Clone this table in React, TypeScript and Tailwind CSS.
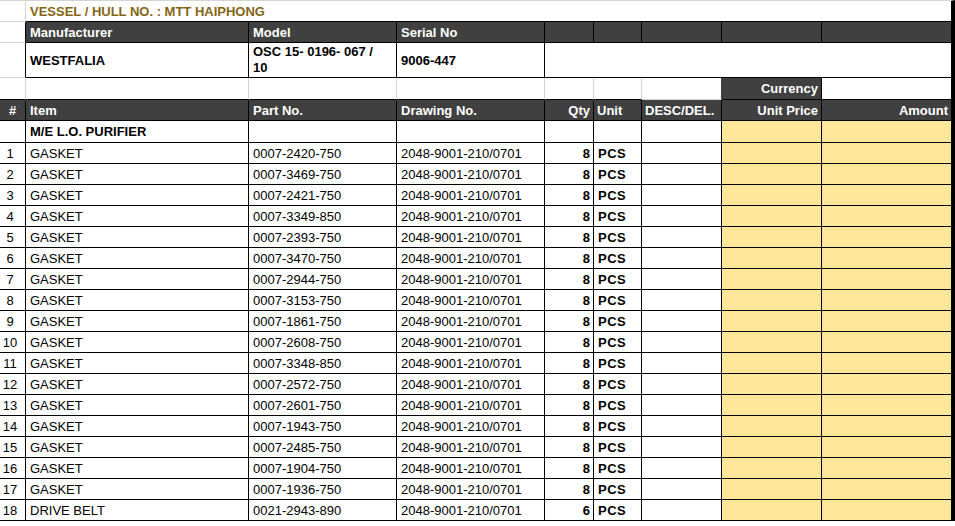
const COLS = "grid grid-cols-[26px_223px_148px_148px_49px_48px_80px_100px_129px]";
const DRAWING = "2048-9001-210/0701";

const items: { item: string; part: string; qty: number }[] = [
  { item: "GASKET", part: "0007-2420-750", qty: 8 },
  { item: "GASKET", part: "0007-3469-750", qty: 8 },
  { item: "GASKET", part: "0007-2421-750", qty: 8 },
  { item: "GASKET", part: "0007-3349-850", qty: 8 },
  { item: "GASKET", part: "0007-2393-750", qty: 8 },
  { item: "GASKET", part: "0007-3470-750", qty: 8 },
  { item: "GASKET", part: "0007-2944-750", qty: 8 },
  { item: "GASKET", part: "0007-3153-750", qty: 8 },
  { item: "GASKET", part: "0007-1861-750", qty: 8 },
  { item: "GASKET", part: "0007-2608-750", qty: 8 },
  { item: "GASKET", part: "0007-3348-850", qty: 8 },
  { item: "GASKET", part: "0007-2572-750", qty: 8 },
  { item: "GASKET", part: "0007-2601-750", qty: 8 },
  { item: "GASKET", part: "0007-1943-750", qty: 8 },
  { item: "GASKET", part: "0007-2485-750", qty: 8 },
  { item: "GASKET", part: "0007-1904-750", qty: 8 },
  { item: "GASKET", part: "0007-1936-750", qty: 8 },
  { item: "DRIVE BELT", part: "0021-2943-890", qty: 6 },
];

function Cell({ className = "", children }: { className?: string; children?: React.ReactNode }) {
  return (
    <div className={`flex items-center border-r border-b leading-[15px] whitespace-nowrap overflow-hidden ${className}`}>
      {children}
    </div>
  );
}

export default function App() {
  return (
    <div className="w-[955px] min-h-[526px] bg-white text-[13px] text-black font-['Liberation_Sans',Arial,sans-serif]">
      <div className="w-[955px] border-t border-[#d4d4d4] border-r-4 border-r-black">
        {/* title */}
        <div className={`${COLS} h-[21px]`}>
          <Cell className="border-[#d4d4d4]" />
          <Cell className="col-span-8 border-r-0 border-b-black pl-[4px] font-bold text-[#846615]">
            VESSEL / HULL NO. : MTT HAIPHONG
          </Cell>
        </div>

        {/* equipment header */}
        <div className={`${COLS} h-[21px]`}>
          <Cell className="border-b-[#d4d4d4] border-r-black" />
          <Cell className="bg-[#404040] border-black pl-[4px] font-bold text-white">Manufacturer</Cell>
          <Cell className="bg-[#404040] border-black pl-[4px] font-bold text-white">Model</Cell>
          <Cell className="bg-[#404040] border-black pl-[4px] font-bold text-white">Serial No</Cell>
          <Cell className="bg-[#404040] border-black" />
          <Cell className="bg-[#404040] border-black" />
          <Cell className="bg-[#404040] border-black" />
          <Cell className="bg-[#404040] border-black" />
          <Cell className="bg-[#404040] border-black border-r-0" />
        </div>

        {/* equipment info */}
        <div className={`${COLS} h-[35px]`}>
          <Cell className="border-b-[#d4d4d4] border-r-black" />
          <Cell className="border-black pl-[4px] font-bold">WESTFALIA</Cell>
          <Cell className="border-black pl-[4px] font-bold whitespace-normal leading-[16px]">
            OSC 15- 0196- 067 /<br />10
          </Cell>
          <Cell className="border-black pl-[4px] font-bold">9006-447</Cell>
          <Cell className="col-span-5 border-black border-r-0" />
        </div>

        {/* spacer row with currency */}
        <div className={`${COLS} h-[22px]`}>
          <Cell className="border-[#d4d4d4] border-b-black" />
          <Cell className="border-[#d4d4d4] border-b-black" />
          <Cell className="border-[#d4d4d4] border-b-black" />
          <Cell className="border-[#d4d4d4] border-b-black" />
          <Cell className="border-[#d4d4d4] border-b-black" />
          <Cell className="border-[#d4d4d4] border-b-black" />
          <Cell className="border-[#d4d4d4] border-r-[#404040]" />
          <Cell className="bg-[#404040] border-black justify-end pr-[3px] font-bold text-white">Currency</Cell>
          <Cell className="border-black border-r-0" />
        </div>

        {/* column header */}
        <div className={`${COLS} h-[21px] font-bold text-white`}>
          <Cell className="bg-[#404040] border-black justify-center">#</Cell>
          <Cell className="bg-[#404040] border-black pl-[4px]">Item</Cell>
          <Cell className="bg-[#404040] border-black pl-[4px]">Part No.</Cell>
          <Cell className="bg-[#404040] border-black pl-[4px]">Drawing No.</Cell>
          <Cell className="bg-[#404040] border-black justify-end pr-[3px]">Qty</Cell>
          <Cell className="bg-[#404040] border-black pl-[3px]">Unit</Cell>
          <Cell className="bg-[#404040] border-black pl-[3px]">DESC/DEL.</Cell>
          <Cell className="bg-[#404040] border-black justify-end pr-[3px]">Unit Price</Cell>
          <Cell className="bg-[#404040] border-black border-r-0 justify-end pr-[3px]">Amount</Cell>
        </div>

        {/* section row */}
        <div className={`${COLS} h-[22px]`}>
          <Cell className="border-black" />
          <Cell className="border-black pl-[4px] font-bold">M/E L.O. PURIFIER</Cell>
          <Cell className="border-black" />
          <Cell className="border-black" />
          <Cell className="border-black" />
          <Cell className="border-black" />
          <Cell className="border-black" />
          <Cell className="border-black bg-[#ffe699]" />
          <Cell className="border-black border-r-0 bg-[#ffe699]" />
        </div>

        {items.map((row, i) => (
          <div key={i} className={`${COLS} h-[21px]`}>
            <Cell className="border-black justify-center pr-[5px]">{i + 1}</Cell>
            <Cell className="border-black pl-[4px]">{row.item}</Cell>
            <Cell className="border-black pl-[4px]">{row.part}</Cell>
            <Cell className="border-black pl-[4px]">{DRAWING}</Cell>
            <Cell className="border-black justify-end pr-[3px] font-bold">{row.qty}</Cell>
            <Cell className="border-black pl-[4px] font-bold tracking-[0.5px]">PCS</Cell>
            <Cell className="border-black" />
            <Cell className="border-black bg-[#ffe699]" />
            <Cell className="border-black border-r-0 bg-[#ffe699]" />
          </div>
        ))}
      </div>
    </div>
  );
}
